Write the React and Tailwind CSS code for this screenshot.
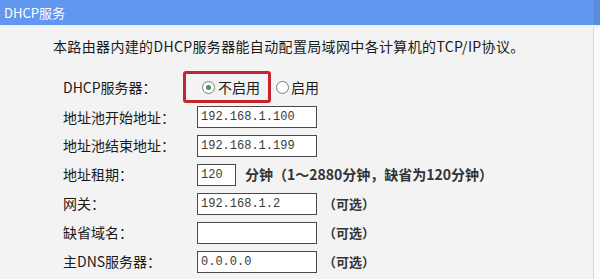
import React from "react";

const F = { fontFamily: '"Noto Sans CJK SC", "Liberation Sans", sans-serif' };

function Radio({ checked }) {
  return (
    <span className="inline-flex h-[13px] w-[13px] items-center justify-center rounded-full border border-[#7a7a7a] bg-white">
      {checked && <span className="h-[5px] w-[5px] rounded-full bg-[#3f9a4a]" />}
    </span>
  );
}

function Input({ value, w = "w-[120px]" }) {
  return (
    <div
      className={`flex h-[22px] ${w} items-center border border-[#4a4a4a] bg-white pl-[3px] text-[12px] text-[#3a3a3a]`}
      style={{ fontFamily: '"Liberation Mono", monospace' }}
    >
      {value}
    </div>
  );
}

function Row({ label, h = "h-[29px]", children }) {
  return (
    <div className={`flex ${h} items-center`}>
      <div className="w-[134px] shrink-0 text-[14px] text-[#1a1a1a]">{label}</div>
      <div className="flex items-center">{children}</div>
    </div>
  );
}

const Opt = () => <span className="ml-[6px] text-[13px] font-bold text-[#333]">（可选）</span>;

export default function App() {
  return (
    <div className="h-[279px] w-[600px] overflow-hidden bg-[#f3f3f3]" style={F}>
      <div className="flex h-[25px] items-center bg-[#6197ee] pl-[4px] text-[13px] text-white">
        <span className="flex-1">DHCP服务</span>
        <span className="h-full w-[6px] bg-[#5b8ddd]" />
      </div>
      <div className="h-[2px] bg-[#e6f0fb]" />
      <div className="flex">
        <div className="w-[593px] shrink-0">
          <div className="pl-[53px] pt-[9px] text-[14px] leading-[20px] tracking-[0.35px] text-[#1a1a1a]">
            本路由器内建的DHCP服务器能自动配置局域网中各计算机的TCP/IP协议。
          </div>
          <div className="pl-[63px] pt-[15px]">
            <Row label="DHCP服务器：" h="h-[32px]">
              <div className="-ml-[14px] flex h-[32px] w-[88px] items-center rounded-[3px] border-[3px] border-[#c6252d] pl-[16px]">
                <Radio checked />
                <span className="ml-[3px] text-[14px] text-[#1a1a1a]">不启用</span>
              </div>
              <div className="ml-[5px] flex items-center">
                <Radio />
                <span className="ml-[2px] text-[14px] text-[#1a1a1a]">启用</span>
              </div>
            </Row>
            <Row label="地址池开始地址：" h="h-[28px]">
              <Input value="192.168.1.100" />
            </Row>
            <Row label="地址池结束地址：">
              <Input value="192.168.1.199" />
            </Row>
            <Row label="地址租期：">
              <Input value="120" w="w-[39px]" />
              <span className="ml-[9px] text-[14px] font-bold text-[#333]">
                分钟（1～2880分钟，缺省为120分钟）
              </span>
            </Row>
            <Row label="网关：">
              <Input value="192.168.1.2" />
              <Opt />
            </Row>
            <Row label="缺省域名：">
              <Input value="" />
              <Opt />
            </Row>
            <Row label="主DNS服务器：">
              <Input value="0.0.0.0" />
              <Opt />
            </Row>
            <div className="flex h-[29px] items-start pl-[134px] pt-[3px]">
              <div className="h-[22px] w-[120px] border border-[#4a4a4a] bg-white" />
            </div>
          </div>
        </div>
        <div className="h-[260px] w-[1px] bg-[#d8d8d8]" />
        <div className="h-[260px] flex-1 bg-[#fafafa]" />
      </div>
    </div>
  );
}
